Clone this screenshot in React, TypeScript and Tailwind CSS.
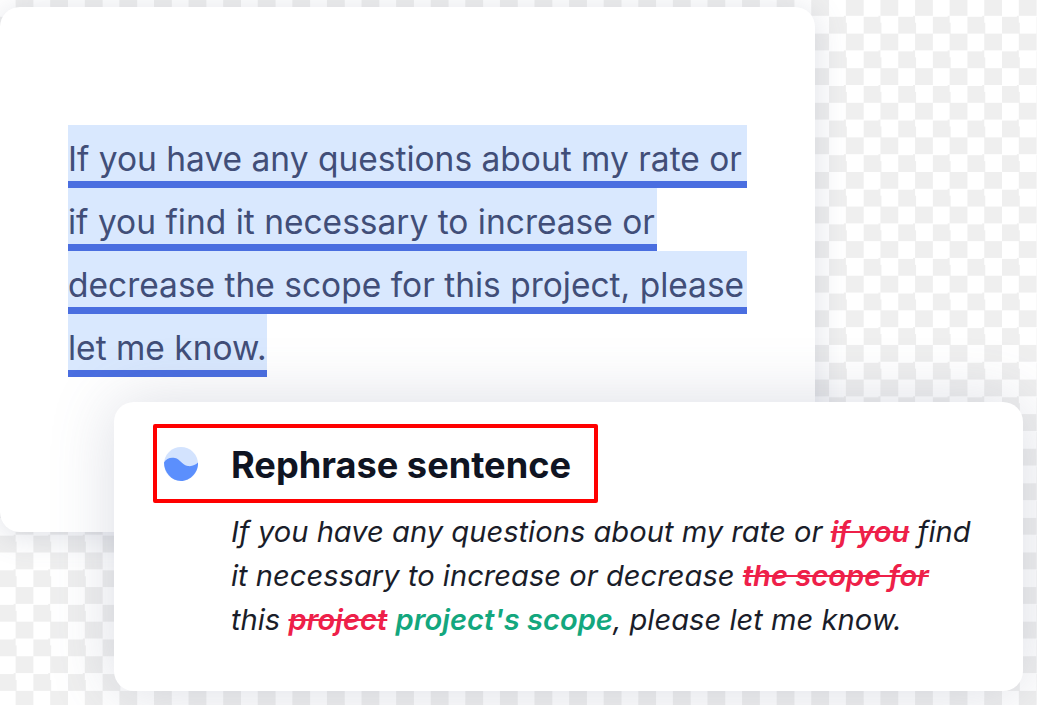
const SOURCE_LINES = [
  { text: "If you have any questions about my rate or", width: "w-[679px]" },
  { text: "if you find it necessary to increase or", width: "w-[589px]" },
  { text: "decrease the scope for this project, please", width: "w-[679px]" },
  { text: "let me know.", width: "w-[199px]" },
];

function WaveIcon() {
  return (
    <svg width="36" height="36" viewBox="0 0 36 36" className="shrink-0">
      <circle cx="18" cy="18" r="17" fill="#d3e3fe" />
      <path
        d="M1 16.5C3 12.5 7.5 11 12 12C17 13 19 19 25 20C29 20.6 32.5 19 35 16.5C35.6 26 27.5 35 18 35C8.5 35 1 26 1 16.5Z"
        fill="#5b8ffd"
      />
    </svg>
  );
}

function Removed({ children }: { children: string }) {
  return <span className="font-semibold text-[#ee2049] line-through">{children}</span>;
}

export default function App() {
  return (
    <div className="h-[705px] w-[1037px] overflow-hidden bg-white bg-[conic-gradient(#efefef_25%,#ffffff_0_50%,#efefef_0_75%,#ffffff_0)] bg-[length:34.6px_34.6px] bg-[position:-1.2px_-1px] pt-[7px] font-['Inter',sans-serif]">
      <div className="h-[525px] w-[815px] rounded-[20px] bg-white pl-[68px] pt-[118px] shadow-[0_4px_32px_rgba(90,100,130,0.2)]">
        {SOURCE_LINES.map((line) => (
          <div
            key={line.text}
            className={`${line.width} h-[63px] whitespace-nowrap border-b-[7px] border-[#4a6ee0] bg-[#d9e8fe] text-[33.5px] leading-[69px] text-[#414e78]`}
          >
            {line.text}
          </div>
        ))}
      </div>

      <div className="relative ml-[114px] mt-[-130px] h-[289px] w-[909px] rounded-[20px] bg-white pl-[39px] pt-[22px] shadow-[0_0_64px_rgba(90,100,130,0.22)]">
        <div className="flex h-[79px] w-[445px] items-center rounded-[2px] border-4 border-[#ff0000] pl-[6px]">
          <WaveIcon />
          <span className="ml-[32px] mt-[3px] whitespace-nowrap text-[36.2px] font-bold leading-none text-[#0f1422]">
            Rephrase sentence
          </span>
        </div>
        <p className="ml-[78px] mt-[7px] w-[780px] text-[29.1px] italic leading-[44px] tracking-[0.02px] text-[#1a1d29]">
          If you have any questions about my rate or <Removed>if you</Removed> find
          <br />
          it necessary to increase or decrease <Removed>the scope for</Removed>
          <br />
          this <Removed>project</Removed>{" "}
          <span className="font-semibold text-[#13a77e]">project's scope</span>, please let me know.
        </p>
      </div>
    </div>
  );
}
